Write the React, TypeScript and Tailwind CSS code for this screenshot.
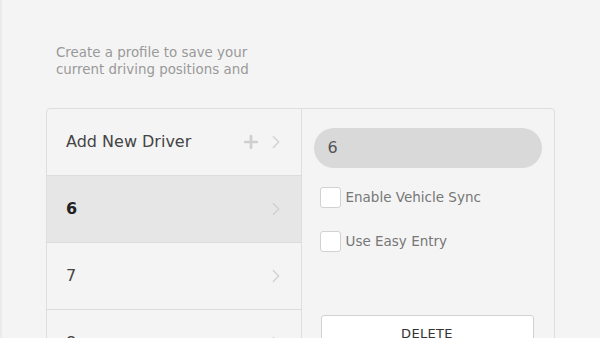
import { Plus, ChevronRight } from "lucide-react";

const font = { fontFamily: '"DejaVu Sans", "Liberation Sans", sans-serif' };

function Row({ label, active, plus }: { label: string; active?: boolean; plus?: boolean }) {
  return (
    <div
      className={`flex h-[67px] items-center justify-between border-b border-[#dcdcdc] pl-[19px] pr-[14px] ${
        active ? "bg-[#e6e6e6]" : ""
      }`}
    >
      <span
        className={`text-[16px] ${active ? "font-bold text-[#222]" : "text-[#444]"}`}
      >
        {label}
      </span>
      <span className="flex items-center gap-[4px] text-[#cfcfcf]">
        {plus && <Plus size={20} strokeWidth={3.2} />}
        <ChevronRight size={22} strokeWidth={1.3} />
      </span>
    </div>
  );
}

function Check({ label }: { label: string }) {
  return (
    <label className="flex items-center gap-[5px]">
      <span className="h-[21px] w-[21px] rounded-[3px] border border-[#d2d2d2] bg-white" />
      <span className="text-[13.5px] text-[#777]">{label}</span>
    </label>
  );
}

export default function App() {
  return (
    <div
      className="h-[338px] w-[600px] overflow-hidden border-l-2 border-[#ebebeb] bg-[#f4f4f4] pl-[44px] pt-[44px]"
      style={font}
    >
      <p className="pl-[10px] text-[13.4px] leading-[17px] text-[#999]">
        Create a profile to save your
        <br />
        current driving positions and
      </p>
      <div className="mt-[30px] grid w-[509px] grid-cols-2 rounded-[4px] border border-[#dedede]">
        <div>
          <Row label="Add New Driver" plus />
          <Row label="6" active />
          <Row label="7" />
          <Row label="8" />
        </div>
        <div className="flex flex-col border-l border-[#dedede] pl-[12px] pr-[12px] pt-[19px]">
          <div className="flex h-[40px] items-center rounded-full bg-[#d9d9d9] px-[14px] text-[16px] text-[#555]">
            6
          </div>
          <div className="mt-[19px] flex flex-col gap-[23px] pl-[6px]">
            <Check label="Enable Vehicle Sync" />
            <Check label="Use Easy Entry" />
          </div>
          <button
            type="button"
            className="ml-[7px] mt-[63px] h-[40px] w-[213px] rounded-[3px] border border-[#d2d2d2] bg-white pb-[2px] text-[13px] font-medium tracking-wide text-[#333]"
          >
            DELETE
          </button>
        </div>
      </div>
    </div>
  );
}
